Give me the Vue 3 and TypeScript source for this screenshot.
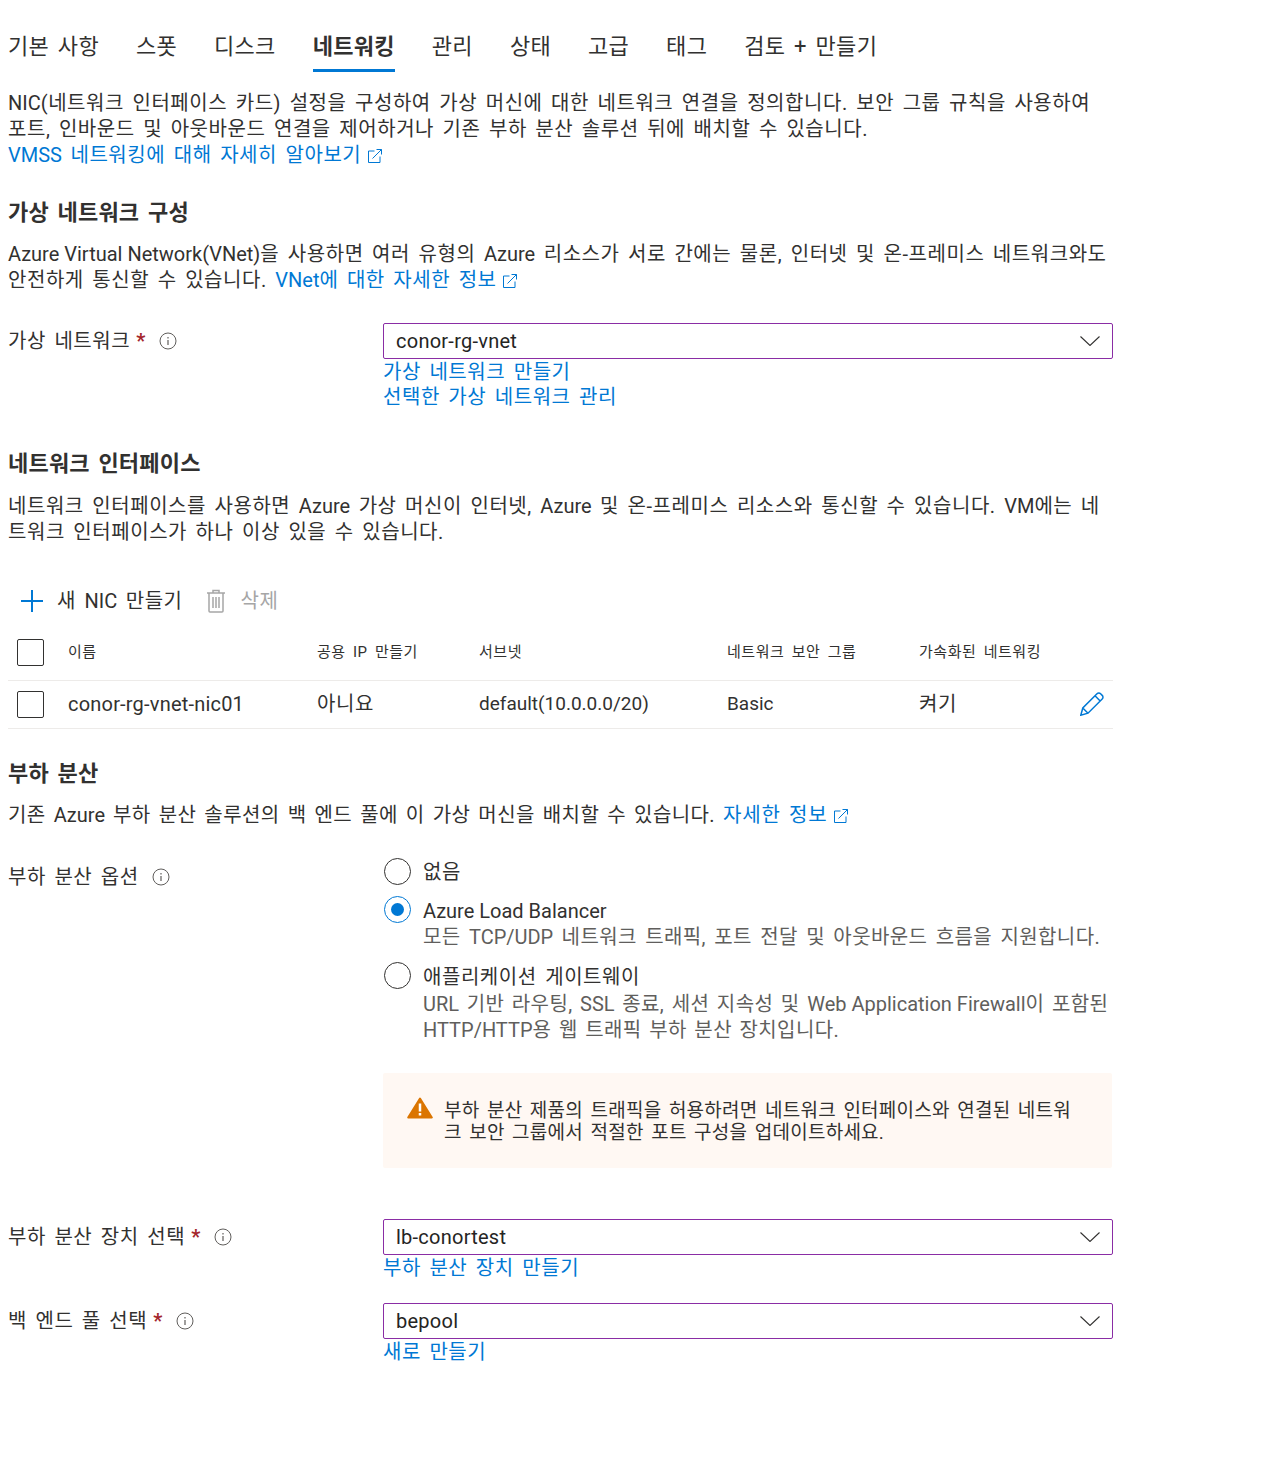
<template>
  <div class="page">
    <nav class="tabs">
      <a v-for="t in tabs" :key="t" class="tab" :class="{ active: t === '네트워킹' }">{{ t }}</a>
    </nav>

    <p class="intro">
      <span class="lat">NIC</span>(네트워크 인터페이스 카드) 설정을 구성하여 가상 머신에 대한 네트워크 연결을 정의합니다. 보안 그룹 규칙을 사용하여<br />
      포트, 인바운드 및 아웃바운드 연결을 제어하거나 기존 부하 분산 솔루션 뒤에 배치할 수 있습니다.<br />
      <a class="link"><span class="lat">VMSS</span> 네트워킹에 대해 자세히 알아보기
        <svg class="ext" width="16" height="16" viewBox="0 0 16 16" fill="none"><path d="M7.500 3H1.500v11.500H13V8.500M5.500 10.500 14.500 1.500M9.500 1.500h5v5" stroke="#0078d4" stroke-width="1"/></svg>
      </a>
    </p>

    <h2 class="h-vnet">가상 네트워크 구성</h2>
    <p class="para">
      <span class="lat">Azure Virtual Network(VNet)</span>을 사용하면 여러 유형의 <span class="lat">Azure</span> 리소스가 서로 간에는 물론, 인터넷 및 온-프레미스 네트워크와도<br />
      안전하게 통신할 수 있습니다. <a class="link"><span class="lat">VNet</span>에 대한 자세한 정보
        <svg class="ext" width="16" height="16" viewBox="0 0 16 16" fill="none"><path d="M7.500 3H1.500v11.500H13V8.500M5.500 10.500 14.500 1.500M9.500 1.500h5v5" stroke="#0078d4" stroke-width="1"/></svg>
      </a>
    </p>

    <div class="field f-vnet">
      <label class="lbl">가상 네트워크<span class="req">*</span>
        <svg class="info" width="18" height="18" viewBox="0 0 18 18" fill="none"><circle cx="9" cy="9" r="8" stroke="#605e5c"/><path d="M9 8v5M9 5v1.500" stroke="#605e5c" stroke-width="1.200"/></svg>
      </label>
      <div class="ctl">
        <div class="select">conor-rg-vnet
          <svg width="20" height="10" viewBox="0 0 20 10" fill="none"><path d="M.5.5 10 9.500 19.500.5" stroke="#323130" stroke-width="1.100"/></svg>
        </div>
        <a class="link block">가상 네트워크 만들기</a>
        <a class="link block">선택한 가상 네트워크 관리</a>
      </div>
    </div>

    <h2 class="h-nic">네트워크 인터페이스</h2>
    <p class="para">
      네트워크 인터페이스를 사용하면 <span class="lat">Azure</span> 가상 머신이 인터넷, <span class="lat">Azure</span> 및 온-프레미스 리소스와 통신할 수 있습니다. <span class="lat">VM</span>에는 네<br />
      트워크 인터페이스가 하나 이상 있을 수 있습니다.
    </p>

    <div class="toolbar">
      <span class="tool">
        <svg width="24" height="24" viewBox="0 0 24 24" fill="none"><path d="M12 1v22M1 12h22" stroke="#0078d4" stroke-width="2"/></svg>
        <span>새 <span class="lat">NIC</span> 만들기</span>
      </span>
      <span class="tool disabled">
        <svg width="18" height="24" viewBox="0 0 18 24" fill="none" stroke="#a6a6a6" stroke-width="1.500"><path d="M0 4h18M6 4V1.500h6V4M2 4v18a1 1 0 0 0 1 1h12a1 1 0 0 0 1-1V4M6 8v11M9 8v11M12 8v11"/></svg>
        삭제
      </span>
    </div>

    <div class="row head">
      <span class="cell check"><i class="box"></i></span>
      <span v-for="h in headers" :key="h.text" class="cell" :style="{ width: h.w + 'px' }">{{ h.text }}</span>
    </div>
    <div class="row body">
      <span class="cell check"><i class="box"></i></span>
      <span v-for="c in cells" :key="c.text" class="cell txt" :class="c.cls" :style="{ width: c.w + 'px' }">{{ c.text }}</span>
      <svg class="pencil" width="24" height="24" viewBox="0 0 24 24" fill="none" stroke="#0078d4" stroke-width="1.500"><path d="M.8 23.200 2.800 16 17 1.800a2.500 2.500 0 0 1 3.600 0l1.600 1.600a2.500 2.500 0 0 1 0 3.600L8 21.200zM2.800 16 8 21.200M15 3.800l5.200 5.200"/></svg>
    </div>

    <h2 class="h-lb">부하 분산</h2>
    <p class="para p-lb">
      기존 <span class="lat">Azure</span> 부하 분산 솔루션의 백 엔드 풀에 이 가상 머신을 배치할 수 있습니다. <a class="link">자세한 정보
        <svg class="ext" width="16" height="16" viewBox="0 0 16 16" fill="none"><path d="M7.500 3H1.500v11.500H13V8.500M5.500 10.500 14.500 1.500M9.500 1.500h5v5" stroke="#0078d4" stroke-width="1"/></svg>
      </a>
    </p>

    <div class="field f-opt">
      <label class="lbl">부하 분산 옵션
        <svg class="info" width="18" height="18" viewBox="0 0 18 18" fill="none"><circle cx="9" cy="9" r="8" stroke="#605e5c"/><path d="M9 8v5M9 5v1.500" stroke="#605e5c" stroke-width="1.200"/></svg>
      </label>
      <div class="ctl">
        <div class="radio r1">
          <i class="dot"></i>
          <div>없음</div>
        </div>
        <div class="radio r2">
          <i class="dot on"></i>
          <div><span class="lat">Azure Load Balancer</span><div class="sub">모든 <span class="lat">TCP/UDP</span> 네트워크 트래픽, 포트 전달 및 아웃바운드 흐름을 지원합니다.</div></div>
        </div>
        <div class="radio r3">
          <i class="dot"></i>
          <div>애플리케이션 게이트웨이<div class="sub s3"><span class="lat">URL</span> 기반 라우팅, <span class="lat">SSL</span> 종료, 세션 지속성 및 <span class="lat">Web Application Firewall</span>이 포함된<br /><span class="lat">HTTP/HTTP</span>용 웹 트래픽 부하 분산 장치입니다.</div></div>
        </div>
        <div class="warn">
          <svg width="26" height="22" viewBox="0 0 26 22"><path d="M13 1.500 24.800 20.500H1.200z" fill="#db7500" stroke="#db7500" stroke-width="2" stroke-linejoin="round"/><path d="M13 6.500v8M13 16v2.500" stroke="#fff" stroke-width="2.500"/></svg>
          <div>부하 분산 제품의 트래픽을 허용하려면 네트워크 인터페이스와 연결된 네트워<br />크 보안 그룹에서 적절한 포트 구성을 업데이트하세요.</div>
        </div>
      </div>
    </div>

    <div class="field f-lb">
      <label class="lbl">부하 분산 장치 선택<span class="req">*</span>
        <svg class="info" width="18" height="18" viewBox="0 0 18 18" fill="none"><circle cx="9" cy="9" r="8" stroke="#605e5c"/><path d="M9 8v5M9 5v1.500" stroke="#605e5c" stroke-width="1.200"/></svg>
      </label>
      <div class="ctl">
        <div class="select">lb-conortest
          <svg width="20" height="10" viewBox="0 0 20 10" fill="none"><path d="M.5.5 10 9.500 19.500.5" stroke="#323130" stroke-width="1.100"/></svg>
        </div>
        <a class="link block">부하 분산 장치 만들기</a>
      </div>
    </div>

    <div class="field f-pool">
      <label class="lbl">백 엔드 풀 선택<span class="req">*</span>
        <svg class="info" width="18" height="18" viewBox="0 0 18 18" fill="none"><circle cx="9" cy="9" r="8" stroke="#605e5c"/><path d="M9 8v5M9 5v1.500" stroke="#605e5c" stroke-width="1.200"/></svg>
      </label>
      <div class="ctl">
        <div class="select">bepool
          <svg width="20" height="10" viewBox="0 0 20 10" fill="none"><path d="M.5.5 10 9.500 19.500.5" stroke="#323130" stroke-width="1.100"/></svg>
        </div>
        <a class="link block">새로 만들기</a>
      </div>
    </div>
  </div>
</template>

<script setup lang="ts">
const tabs = ['기본 사항', '스폿', '디스크', '네트워킹', '관리', '상태', '고급', '태그', '검토 + 만들기']

const headers = [
  { text: '이름', w: 249 },
  { text: '공용 IP 만들기', w: 162 },
  { text: '서브넷', w: 248 },
  { text: '네트워크 보안 그룹', w: 192 },
  { text: '가속화된 네트워킹', w: 150 },
]

const cells = [
  { text: 'conor-rg-vnet-nic01', w: 249, cls: 'c-name' },
  { text: '아니요', w: 162, cls: '' },
  { text: 'default(10.0.0.0/20)', w: 248, cls: 'c-small' },
  { text: 'Basic', w: 192, cls: 'c-small' },
  { text: '켜기', w: 150, cls: '' },
]
</script>

<style scoped>
.page {
  width: 1105px;
  height: 1472px;
  padding-left: 8px;
  font-family: Roboto, "Noto Sans CJK KR", sans-serif;
  font-size: 20px;
  line-height: 26px;
  letter-spacing: 0.55px;
  word-spacing: 3px;
  white-space: nowrap;
  color: #323130;
  overflow: hidden;
}

.lat {
  letter-spacing: 0;
  word-spacing: 0;
}

.tabs {
  display: flex;
  gap: 37px;
  height: 42px;
  padding-top: 30px;
}

.tab {
  height: 42px;
  color: #323130;
  line-height: 34px;
  font-size: 22px;
  letter-spacing: 0.3px;
}

.tab.active {
  font-weight: 700;
  border-bottom: 3px solid #0078d4;
  height: 39px;
}

p {
  margin: 0;
}

.intro {
  margin-top: 18px;
}

.link {
  color: #0078d4;
}

.block {
  display: block;
  line-height: 25px;
}

.ext {
  vertical-align: -2px;
  margin-left: -3px;
}

h2 {
  margin: 0;
  font-size: 22px;
  line-height: 30px;
  font-weight: 700;
  letter-spacing: 0.2px;
}

.h-vnet {
  margin-top: 30px;
  margin-bottom: 13px;
}

.h-nic {
  margin-top: 39px;
  margin-bottom: 14px;
}

.h-lb {
  margin-top: 30px;
  margin-bottom: 13px;
}

.p-lb {
  letter-spacing: 0.4px;
  word-spacing: 2.7px;
}

.p-lb .link {
  letter-spacing: 0.8px;
}

.field {
  display: flex;
}

.lbl {
  width: 375px;
  flex: none;
  display: flex;
  align-items: flex-start;
  padding-top: 5px;
}

.req {
  color: #a4262c;
  margin-left: 6px;
  font-weight: 700;
}

.info {
  margin: 4px 0 0 13px;
}

.ctl {
  flex: 1;
}

.select {
  height: 36px;
  margin-bottom: 1px;
  box-sizing: border-box;
  border: 1px solid #8a2da5;
  border-radius: 2px;
  padding: 0 12px;
  display: flex;
  align-items: center;
  justify-content: space-between;
  color: #252423;
  letter-spacing: 0.25px;
}

.f-vnet {
  margin-top: 30px;
}

.toolbar {
  display: flex;
  gap: 24px;
  margin-top: 40px;
  height: 32px;
  padding-left: 12px;
  align-items: center;
}

.tool {
  display: flex;
  align-items: center;
  gap: 13px;
}

.tool.disabled {
  color: #a6a6a6;
  gap: 16px;
}

.row {
  display: flex;
  align-items: center;
  border-bottom: 1px solid #edebe9;
}

.head {
  height: 56px;
  margin-top: 7px;
  font-size: 15px;
}

.body {
  height: 47px;
  position: relative;
}

.txt {
  margin-top: -2px;
}

.c-name {
  letter-spacing: 0.2px;
}

.c-small {
  font-size: 19px;
  letter-spacing: 0;
}

.check {
  width: 60px;
  padding-left: 9px;
  box-sizing: border-box;
  display: flex;
}

.box {
  display: block;
  width: 27px;
  height: 27px;
  box-sizing: border-box;
  border: 1px solid #323130;
  border-radius: 2px;
}

.pencil {
  position: absolute;
  right: 9px;
  top: 11px;
}

.f-opt {
  margin-top: 31px;
}

.radio {
  display: flex;
  gap: 12px;
}

.dot {
  flex: none;
  width: 27px;
  height: 27px;
  margin: -1px 0 0 1px;
  box-sizing: border-box;
  border: 1px solid #323130;
  border-radius: 50%;
  position: relative;
}

.r2 .dot,
.r3 .dot {
  margin-top: -2px;
}

.dot.on {
  border-color: #0078d4;
}

.dot.on::after {
  content: "";
  position: absolute;
  left: 6px;
  top: 6px;
  width: 13px;
  height: 13px;
  border-radius: 50%;
  background: #0078d4;
}

.sub {
  color: #605e5c;
  letter-spacing: 0.4px;
}

.s3 {
  margin-top: 1px;
  word-spacing: 2.2px;
}

.r2 {
  margin-top: 13px;
}

.r3 {
  margin-top: 14px;
}

.warn {
  margin-top: 30px;
  height: 95px;
  width: 729px;
  box-sizing: border-box;
  background: #fff8f3;
  border-radius: 2px;
  padding: 24px 24px 0;
  display: flex;
  gap: 11px;
  line-height: 22px;
  font-size: 19px;
  letter-spacing: 0.25px;
  word-spacing: 2.5px;
}

.warn > div {
  margin-top: 3px;
}

.f-lb {
  margin-top: 51px;
}

.f-pool {
  margin-top: 22px;
}
</style>
